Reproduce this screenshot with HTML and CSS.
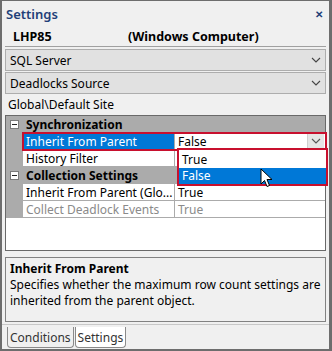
FILE: index.html
```html
<!DOCTYPE html>
<html>
<head>
<meta charset="utf-8">
<link rel="stylesheet" href="styles.css">
</head>
<body>
<div class="window">
  <div class="titlebar">
    <span class="title">Settings</span>
    <span class="close">&#x2715;</span>
  </div>
  <div class="header">
    <span class="host">LHP85</span>
    <span class="kind">(Windows Computer)</span>
  </div>
  <div class="combo"><span>SQL Server</span><svg class="chev" width="10" height="6" viewBox="0 0 10 6"><path d="M1 1 L5 5 L9 1" fill="none" stroke="#444" stroke-width="1.1"/></svg></div>
  <div class="combo"><span>Deadlocks Source</span><svg class="chev" width="10" height="6" viewBox="0 0 10 6"><path d="M1 1 L5 5 L9 1" fill="none" stroke="#444" stroke-width="1.1"/></svg></div>
  <div class="path">Global\Default Site</div>
  <div class="grid">
    <div class="row cat">
      <div class="gut"><span class="minus"></span></div>
      <div class="catname">Synchronization</div>
    </div>
    <div class="row item selected">
      <div class="gut"></div>
      <div class="name">Inherit From Parent</div>
      <div class="value editor"><span>False</span><span class="btn"><svg width="10" height="6" viewBox="0 0 10 6"><path d="M1 1 L5 5 L9 1" fill="none" stroke="#555" stroke-width="1.1"/></svg></span></div>
    </div>
    <div class="row item">
      <div class="gut"></div>
      <div class="name">History Filter</div>
      <div class="value"></div>
    </div>
    <div class="row cat">
      <div class="gut"><span class="minus"></span></div>
      <div class="catname">Collection Settings</div>
    </div>
    <div class="row item">
      <div class="gut"></div>
      <div class="name">Inherit From Parent (Glo...</div>
      <div class="value">True</div>
    </div>
    <div class="row item disabled">
      <div class="gut"></div>
      <div class="name">Collect Deadlock Events</div>
      <div class="value">True</div>
    </div>
    <div class="fill"></div>
    <div class="dropdown">
      <div class="opt">True</div>
      <div class="opt sel">False</div>
    </div>
    <svg class="cursor" width="14" height="21" viewBox="0 0 14 21"><path d="M1 1 L1 16 L4.5 12.5 L7 18.5 L9.5 17.5 L7 11.5 L12 11.5 Z" fill="#fff" stroke="#000" stroke-width="1" stroke-linejoin="miter"/></svg>
  </div>
  <div class="desc">
    <div class="dtitle">Inherit From Parent</div>
    <div class="dtext">Specifies whether the maximum row count settings are inherited from the parent object.</div>
  </div>
  <div class="tabs">
    <span class="tab">Conditions</span>
    <span class="tab active">Settings</span>
  </div>
</div>
</body>
</html>
```
FILE: styles.css
```css
html, body {
  margin: 0;
  padding: 0;
  background: #f0f0f0;
}
.window {
  width: 332px;
  height: 351px;
  box-sizing: border-box;
  border: 2px solid #6d6d6d;
  border-top-width: 1px;
  border-right-width: 3px;
  background: #f0f0f0;
  font-family: "Noto Sans", "Open Sans", sans-serif;
  font-size: 12px;
  color: #000;
  display: flex;
  flex-direction: column;
  position: relative;
}
.titlebar {
  height: 26px;
  display: flex;
  align-items: center;
  justify-content: space-between;
  padding: 0 6px 0 4px;
}
.title {
  font-size: 13px;
  font-weight: 600;
  color: #1f3f78;
}
.close {
  font-size: 10px;
  font-weight: bold;
  color: #1f3f78;
}
.header {
  display: flex;
  height: 18px;
  align-items: center;
  padding-left: 8px;
  margin: 0 3px 0 3px;
  border-bottom: 1px solid #a0a0a0;
  font-weight: bold;
  font-size: 12.5px;
  padding-bottom: 1px;
}
.host {
  width: 115px;
}
.combo {
  margin: 2px 3px 0 3px;
  height: 20px;
  border: 1px solid #adadad;
  background: #e1e1e1;
  display: flex;
  align-items: center;
  justify-content: space-between;
  padding: 0 4px 0 4px;
}
.combo + .combo {
  margin-top: 1px;
}
.path {
  height: 21px;
  display: flex;
  align-items: center;
  padding-left: 6px;
}
.grid {
  margin: 0 3px;
  border: 1px solid #696969;
  background: #fff;
  height: 134px;
  display: flex;
  flex-direction: column;
  position: relative;
}
.row {
  height: 17px;
  display: flex;
  align-items: stretch;
  flex-shrink: 0;
}
.gut {
  width: 17px;
  background: #ababab;
  display: flex;
  align-items: center;
  justify-content: center;
  flex-shrink: 0;
}
.minus {
  width: 7px;
  height: 7px;
  border: 1px solid #7a7a7a;
  background: #fdfdfd;
  position: relative;
}
.minus::after {
  content: "";
  position: absolute;
  left: 1px;
  top: 3px;
  width: 5px;
  height: 1px;
  background: #222;
}
.cat {
  background: #ababab;
}
.catname {
  font-weight: bold;
  padding-left: 3px;
  display: flex;
  align-items: center;
}
.item .name {
  width: 152px;
  flex-shrink: 0;
  padding-left: 3px;
  box-sizing: border-box;
  display: flex;
  align-items: center;
  border-bottom: 1px solid #ababab;
  border-right: 1px solid #ababab;
  white-space: nowrap;
  overflow: hidden;
}
.item .value {
  flex: 1;
  padding-left: 3px;
  display: flex;
  align-items: center;
  border-bottom: 1px solid #ababab;
}
.selected {
  position: relative;
}
.selected .name {
  background: #0078d7;
  color: #fff;
}
.selected::after {
  content: "";
  position: absolute;
  left: 16px;
  right: -2px;
  top: -1px;
  bottom: -1px;
  border: 2px solid #c8102e;
  pointer-events: none;
}
.editor {
  justify-content: space-between;
  padding-right: 1px;
}
.btn {
  width: 16px;
  height: 15px;
  background: #e5e5e5;
  border-left: 1px solid #cfcfcf;
  display: flex;
  align-items: center;
  justify-content: center;
}
.disabled .name, .disabled .value {
  color: #8a8a8a;
}
.fill {
  flex: 1;
}
.dropdown {
  position: absolute;
  left: 171px;
  top: 32px;
  width: 147px;
  border: 2px solid #c8102e;
  background: #fff;
  padding: 1px 0 0 0;
}
.opt {
  height: 17px;
  line-height: 17px;
  padding-left: 3px;
}
.opt.sel {
  height: 16px;
  line-height: 16px;
  background: #0078d7;
  color: #fff;
}
.cursor {
  position: absolute;
  left: 254px;
  top: 52px;
}
.desc {
  margin: 6px 3px 0 3px;
  height: 65px;
  border: 1px solid #828282;
  padding: 3px 4px;
  box-sizing: border-box;
  line-height: 16px;
}
.dtitle {
  font-weight: bold;
}
.tabs {
  margin-top: 2px;
  border-top: 1px solid #c8c8c8;
  display: flex;
  padding-left: 5px;
  padding-top: 2px;
}
.tab {
  height: 20px;
  display: flex;
  align-items: center;
  padding: 0 2px;
  border: 1px solid #8a8a8a;
  border-top: none;
  border-radius: 0 0 4px 4px;
  color: #333;
}
.tab.active {
  background: #fff;
  margin-left: 1px;
}
```
